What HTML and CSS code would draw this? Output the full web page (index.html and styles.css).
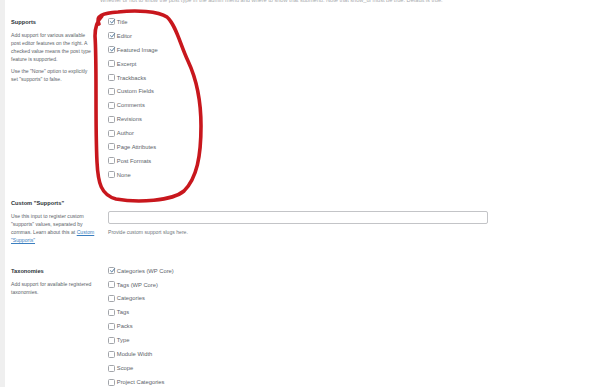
FILE: index.html
```html
<!DOCTYPE html>
<html lang="en">
<head>
<meta charset="utf-8">
<title>Supports settings</title>
<link rel="stylesheet" href="styles.css">
</head>
<body>
<div class="page">
  <div class="edge"></div>
  <main class="content">
    <p class="prev-desc">Whether or not to show the post type in the admin menu and where to show that submenu. Note that show_ui must be true. Default is true.</p>

    <section class="row row-supports">
      <div class="th">
        <div class="label">Supports</div>
        <p class="desc first">Add support for various available<br>post editor features on the right. A<br>checked value means the post type<br>feature is supported.</p>
        <p class="desc second">Use the "None" option to explicitly<br>set "supports" to false.</p>
      </div>
      <ul class="checks">
        <li><span class="box"><svg viewBox="0 0 16 16"><path d="M3.2 8.4 L6.4 11.6 L12.8 3.6"/></svg></span>Title</li>
        <li><span class="box"><svg viewBox="0 0 16 16"><path d="M3.2 8.4 L6.4 11.6 L12.8 3.6"/></svg></span>Editor</li>
        <li><span class="box"><svg viewBox="0 0 16 16"><path d="M3.2 8.4 L6.4 11.6 L12.8 3.6"/></svg></span>Featured Image</li>
        <li><span class="box"></span>Excerpt</li>
        <li><span class="box"></span>Trackbacks</li>
        <li><span class="box"></span>Custom Fields</li>
        <li><span class="box"></span>Comments</li>
        <li><span class="box"></span>Revisions</li>
        <li><span class="box"></span>Author</li>
        <li><span class="box"></span>Page Attributes</li>
        <li><span class="box"></span>Post Formats</li>
        <li><span class="box"></span>None</li>
      </ul>
    </section>

    <section class="row row-custom">
      <div class="th">
        <div class="label">Custom "Supports"</div>
        <p class="desc first">Use this input to register custom<br>"supports" values, separated by<br>commas. Learn about this at <a href="#">Custom</a><br><a href="#">"Supports"</a></p>
      </div>
      <div class="field">
        <input class="text-input" type="text" aria-label="Custom supports">
        <p class="help">Provide custom support slugs here.</p>
      </div>
    </section>

    <section class="row row-tax">
      <div class="th">
        <div class="label">Taxonomies</div>
        <p class="desc first">Add support for available registered<br>taxonomies.</p>
      </div>
      <ul class="checks tax">
        <li><span class="box"><svg viewBox="0 0 16 16"><path d="M3.2 8.4 L6.4 11.6 L12.8 3.6"/></svg></span>Categories (WP Core)</li>
        <li><span class="box"></span>Tags (WP Core)</li>
        <li><span class="box"></span>Categories</li>
        <li><span class="box"></span>Tags</li>
        <li><span class="box"></span>Packs</li>
        <li><span class="box"></span>Type</li>
        <li><span class="box"></span>Module Width</li>
        <li><span class="box"></span>Scope</li>
        <li><span class="box"></span>Project Categories</li>
      </ul>
    </section>
  </main>
</div>
<svg class="annotation" viewBox="0 0 600 387" width="600" height="387" aria-hidden="true">
  <path d="M99 24 C95 16, 103 13, 118 12 C136 10, 158 11, 167 17 C176 25, 180 44, 188 61 C196 78, 201 97, 201 126 C201 156, 197 178, 184 191 C172 201, 138 203, 116 199 C101 195, 98 183, 97 162 C95 122, 97 64, 95 36 C95 29, 96 22, 102 16"/>
</svg>
</body>
</html>
```
FILE: styles.css
```css
html, body {
  margin: 0;
  padding: 0;
}
body {
  width: 600px;
  height: 387px;
  overflow: hidden;
  position: relative;
  background: #ffffff;
  font-family: "Liberation Sans", Arial, sans-serif;
  color: #50575e;
}
.page {
  display: flex;
  height: 387px;
}
.edge {
  width: 5px;
  flex: none;
  background: #efefef;
}
.content {
  flex: 1;
  padding-left: 6px;
}
.prev-desc {
  margin: -4px 0 0 89px;
  font-size: 5.6px;
  line-height: 8px;
  color: #a7aaad;
  white-space: nowrap;
  overflow: hidden;
  height: 8px;
}
.row {
  display: grid;
  grid-template-columns: 97px 1fr;
  align-items: start;
}
.row-supports {
  margin-top: 11px;
}
.row-supports .th {
  padding-top: 2px;
}
.row-custom {
  margin-top: 14.5px;
}
.row-custom .th {
  padding-top: 2px;
}
.row-tax {
  margin-top: 19.4px;
}
.row-tax .th {
  padding-top: 2.25px;
}
.label {
  font-size: 5.7px;
  line-height: 10px;
  font-weight: 700;
  color: #2c3338;
  white-space: nowrap;
}
.desc {
  margin: 0;
  font-size: 5.1px;
  line-height: 8.1px;
  color: #5c6369;
  white-space: nowrap;
}
.desc.first {
  margin-top: 4.2px;
}
.row-custom .desc.first {
  margin-top: 3.7px;
}
.row-tax .desc.first {
  margin-top: 4px;
}
.desc.second {
  margin-top: 3.6px;
}
.desc a {
  color: #3b7fc0;
  text-decoration: underline;
}
.checks {
  list-style: none;
  margin: 0;
  padding: 0;
}
.checks li {
  height: 13.9px;
  display: flex;
  align-items: center;
  font-size: 5.8px;
  color: #5c6369;
  white-space: nowrap;
}
.checks.tax li {
  height: 13.95px;
}
.box {
  width: 7px;
  height: 7px;
  box-sizing: border-box;
  border: 1px solid #a2a5aa;
  border-radius: 1.5px;
  background: #fff;
  margin-right: 1.8px;
  flex: none;
  position: relative;
}
.box svg {
  position: absolute;
  left: -0.5px;
  top: -1px;
  width: 7px;
  height: 7px;
  overflow: visible;
}
.box svg path {
  fill: none;
  stroke: #3d6a94;
  stroke-width: 2;
  stroke-linecap: round;
  stroke-linejoin: round;
}
.field {
  padding-top: 14.7px;
}
.text-input {
  display: block;
  box-sizing: border-box;
  width: 380px;
  height: 13.5px;
  margin: 0;
  padding: 0;
  border: 1px solid #c3c4c7;
  border-radius: 2px;
  background: #fff;
  font-size: 5.8px;
}
.help {
  margin: 3.2px 0 0 0;
  font-size: 5.1px;
  line-height: 8px;
  color: #70767c;
}
.annotation {
  position: absolute;
  left: 0;
  top: 0;
  pointer-events: none;
}
.annotation path {
  fill: none;
  stroke: #c8171d;
  stroke-width: 3.6;
  stroke-linecap: round;
  stroke-linejoin: round;
}
```
